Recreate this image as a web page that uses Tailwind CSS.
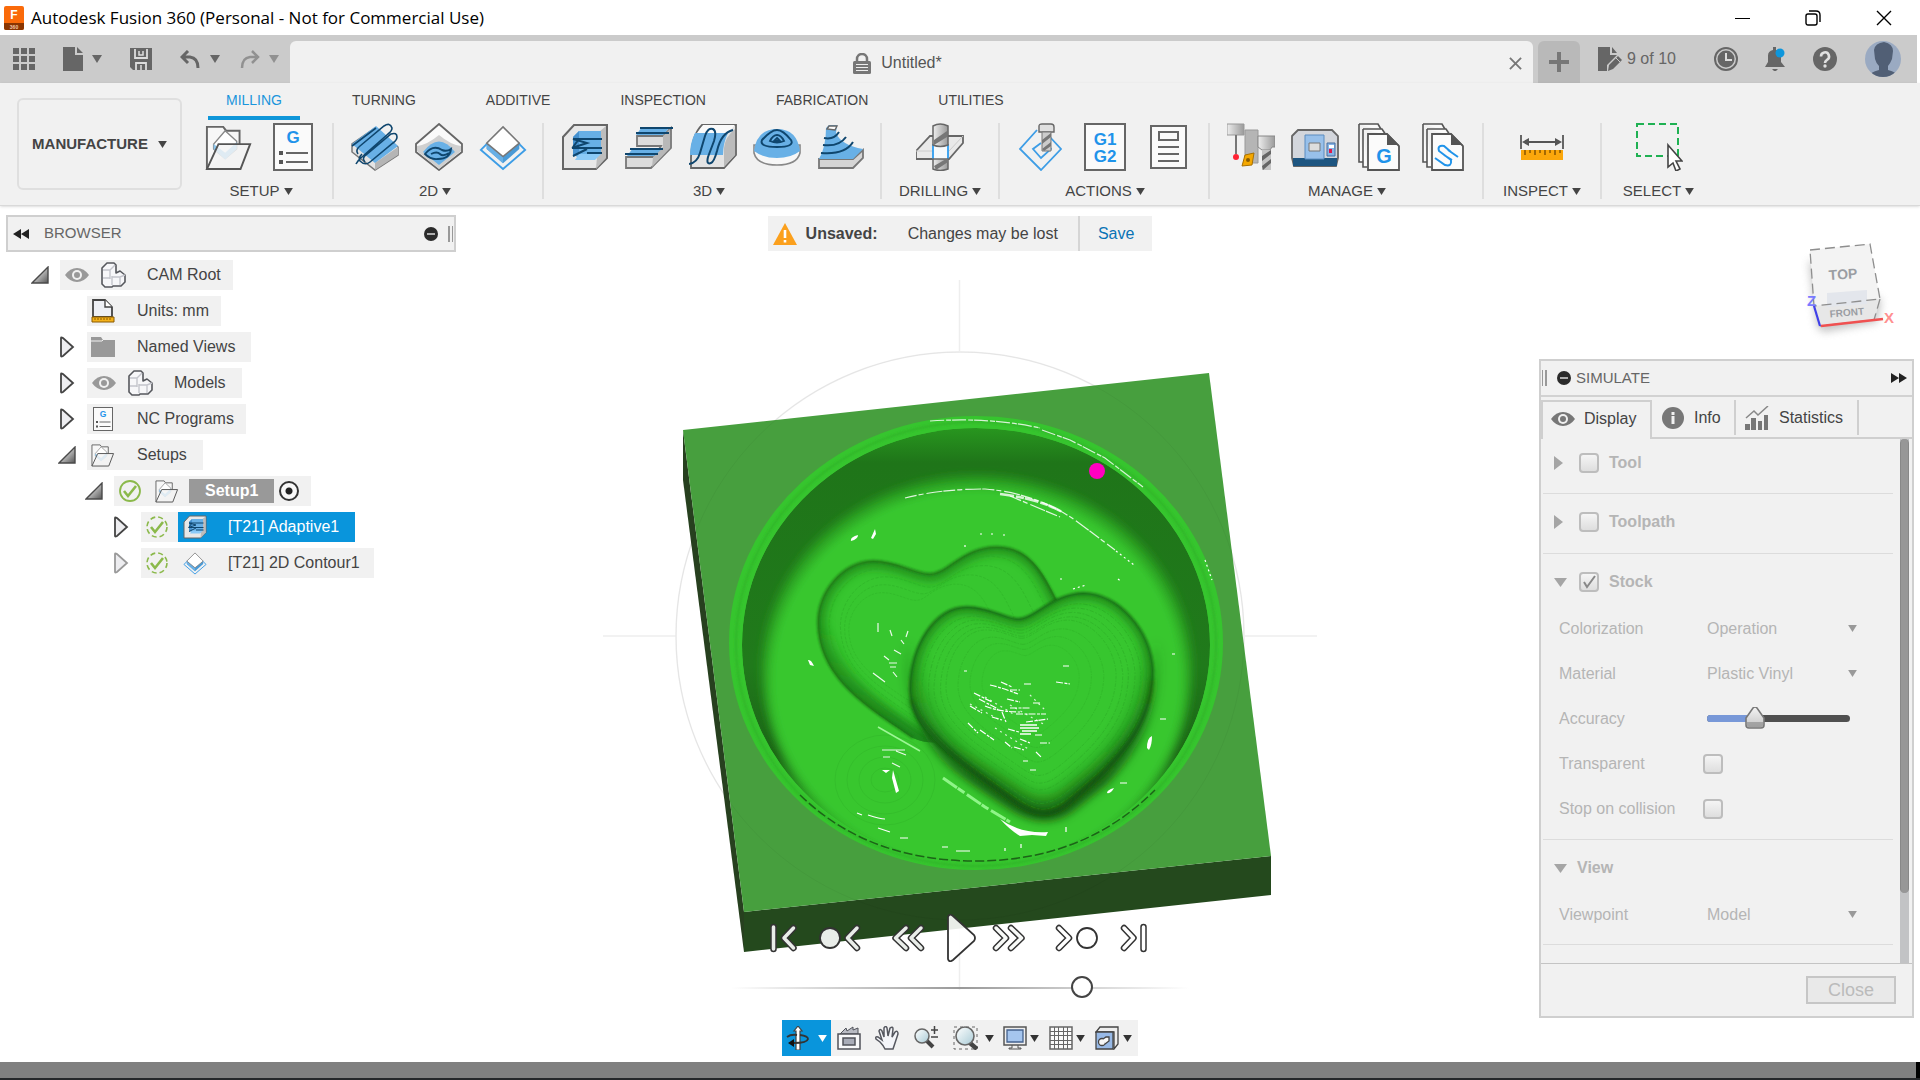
<!DOCTYPE html>
<html lang="en">
<head>
    <meta charset="UTF-8">
    <meta name="viewport" content="width=device-width, initial-scale=1.0">
    <title>Autodesk Fusion 360 (Personal - Not for Commercial Use)</title>
    <script src="https://cdn.jsdelivr.net/npm/@tailwindcss/browser@4"></script>
    <style>
        body { font-family: 'Liberation Sans', Arial, sans-serif; }
    </style>
</head>
<body class="bg-white text-[#444] text-[15px] flex flex-col min-h-screen overflow-hidden">

    <!-- Shared icons -->
    <svg class="absolute w-0 h-0" aria-hidden="true">
        <defs>
            <linearGradient id="grey" x1="0" y1="0" x2="0" y2="1"><stop offset="0" stop-color="#f4f4f4"/><stop offset="1" stop-color="#c4c4c4"/></linearGradient>
            <linearGradient id="greyH" x1="0" y1="0" x2="1" y2="0"><stop offset="0" stop-color="#eee"/><stop offset="1" stop-color="#9a9a9a"/></linearGradient>
            <linearGradient id="tri" x1="0" y1="0" x2="1" y2="1"><stop offset=".3" stop-color="#ddd"/><stop offset="1" stop-color="#555"/></linearGradient>
            <linearGradient id="lens" x1="0" y1="0" x2="1" y2="1"><stop offset="0" stop-color="#fff"/><stop offset="1" stop-color="#a9cbd6"/></linearGradient>
            <symbol id="down" viewBox="0 0 10 8"><path d="M0 0H10L5 8Z" fill="currentColor"/></symbol>
            <symbol id="eye" viewBox="0 0 24 16"><path d="M0 8Q5 1 12 1T24 8Q19 15 12 15T0 8Z" fill="currentColor"/><circle cx="12" cy="8" r="5" fill="#f1f1f1"/><circle cx="12" cy="8" r="3" fill="currentColor"/></symbol>
            <symbol id="open" viewBox="0 0 18 18"><path d="M1 17H17V1Z" fill="url(#tri)" stroke="#4a4a4a" stroke-width="1.4"/></symbol>
            <symbol id="closed" viewBox="0 0 18 22"><path d="M3 2V20Q3 21 5 20L15 11L5 2Q3 1 3 2Z" fill="#ededf0" stroke="currentColor" stroke-width="1.8"/></symbol>
            <symbol id="component" viewBox="0 0 26 26"><path d="M1 22V6L6 1H13L15 3V11L19 9L24 13V20L20 24H12L11 25H4Z" fill="#f7f7f9" stroke="#55575c" stroke-width="1.6" stroke-linejoin="round"/><path d="M2 8H9L14 3M9 8V17M2 16H9M11 15H19L24 13M19 15V23M11 14V23" fill="none" stroke="#c4c5cc" stroke-width="1.4"/></symbol>
            <symbol id="setup" viewBox="0 0 48 50"><path d="M1 48V4H18L21 8H35V22" fill="#f7f7f7" stroke="#666" stroke-width="2"/><path d="M8 22L20 8L32 19V27L20 37L8 27Z" fill="#fff" stroke="#888" stroke-width="1.5"/><path d="M8 22L20 31L32 20V27L20 38L8 27Z" fill="#8cc7ee"/><path d="M1 48L13 22H46L36 48Z" fill="#f4f4f4" fill-opacity=".8" stroke="#555" stroke-width="2"/></symbol>
            <symbol id="ncprog" viewBox="0 0 40 48"><rect x="1" y="1" width="38" height="46" fill="#fafafa" stroke="#666" stroke-width="2"/><path d="M6 28h4v4H6zM6 37h4v4H6z" fill="#555"/><path d="M13 30H35M13 39H35" stroke="#666" stroke-width="2"/><text x="20" y="20" text-anchor="middle" font-size="17" font-weight="bold" fill="#1f93ea">G</text></symbol>
            <symbol id="adaptive" viewBox="0 0 48 48"><path d="M2 14L13 2H46V35L35 46H2Z" fill="#e8e8e8" stroke="#666" stroke-width="2"/><path d="M35 46L45 35V3L38 9Z" fill="#bdbdbd"/><path d="M12 14L18 8H40V30L34 36H18L12 30Z" fill="#68b0e6"/><path d="M12 14L18 8V30L12 34Z" fill="#4691cf"/><path d="M18 31H40L34 37H14Z" fill="#8ccaf7"/><path d="M41 16H12L26 20L11 25H41M12 33L26 26M18 16L12 24M26 30H41" fill="none" stroke="#0f466e" stroke-width="2"/></symbol>
            <symbol id="contour" viewBox="0 0 48 50"><path d="M8 21L1 28L24 48L47 28L40 21" fill="none" stroke="#3d9de6" stroke-width="2"/><path d="M7 21L24 35L41 21V27L24 42L7 27Z" fill="#4a9ad6"/><path d="M7 21V27L24 42V33Z" fill="#68b0e6"/><path d="M24 4L41 21L24 35L7 21Z" fill="#fff" stroke="#777" stroke-width="1.6"/></symbol>
            <symbol id="check" viewBox="0 0 24 24"><path d="M6 12L10 17L18 7" fill="none" stroke="#8bb94b" stroke-width="2.6"/></symbol>
            <symbol id="minus" viewBox="0 0 14 14"><circle cx="7" cy="7" r="7" fill="#2b2b2b"/><path d="M3 7H11" stroke="#ddd" stroke-width="1.5"/></symbol>
            <symbol id="rewind" viewBox="0 0 16 10"><path d="M8 0V10L0 5ZM16 0V10L8 5Z" fill="#222"/></symbol>
            <symbol id="sheets" viewBox="0 0 42 48"><path d="M1 1H20L24 8M1 1V39H5" fill="#fafafa" stroke="#555" stroke-width="1.6"/><path d="M5 6H24L28 12M5 6V44H9" fill="#fafafa" stroke="#555" stroke-width="1.6"/><path d="M10 11H29L41 23V47H10Z" fill="#fbfbfb" stroke="#555" stroke-width="1.8"/><path d="M20 1L41 22H29V10Z" fill="#555"/></symbol>
        </defs>
    </svg>

    <!-- Title bar -->
    <header class="h-[35px] flex items-center justify-between bg-white text-black">
        <div class="flex items-center gap-[7px] pl-1">
            <svg class="w-5 h-6" viewBox="0 0 20 24"><rect width="20" height="24" rx="2" fill="#fa6a0a"/><path d="M0 17H20V22a2 2 0 0 1-2 2H2a2 2 0 0 1-2-2Z" fill="#8a3500"/><text x="10" y="13" text-anchor="middle" font-size="12" font-weight="bold" fill="#fff">F</text><text x="10" y="22.500" text-anchor="middle" font-size="5" font-weight="bold" fill="#f4c9a8">360</text></svg>
            <h1 class="font-['Open_Sans',sans-serif] text-[17px]">Autodesk Fusion 360 (Personal - Not for Commercial Use)</h1>
        </div>
        <div class="flex">
            <button class="w-[70px] h-8 grid place-items-center" aria-label="Minimize"><svg class="w-4 h-4" viewBox="0 0 16 16"><path d="M0 8.500H15" stroke="#000"/></svg></button>
            <button class="w-[70px] h-8 grid place-items-center" aria-label="Restore"><svg class="w-4 h-4" viewBox="0 0 16 16" fill="none" stroke="#000" stroke-width="1.4"><rect x="1" y="4" width="11" height="11" rx="2"/><path d="M4 1H11Q15 1 15 5V12"/></svg></button>
            <button class="w-[72px] h-8 grid place-items-center" aria-label="Close window"><svg class="w-4 h-4" viewBox="0 0 16 16" stroke="#000" stroke-width="1.4"><path d="M1 1L15 15M15 1L1 15"/></svg></button>
        </div>
    </header>

    <!-- Quick access and document tab -->
    <div class="h-12 mr-[3px] bg-[#cbcbcb] flex items-end text-[#666]">
        <div class="w-[290px] h-full flex items-center pl-[13px]">
            <button class="w-[50px]" aria-label="Data panel"><svg class="w-[22px] h-[22px]" viewBox="0 0 22 22" fill="#666"><path d="M0 0h6v6H0zM8 0h6v6H8zM16 0h6v6h-6zM0 8h6v6H0zM8 8h6v6H8zM16 8h6v6h-6zM0 16h6v6H0zM8 16h6v6H8zM16 16h6v6h-6z"/></svg></button>
            <button class="w-[67px] flex items-center gap-[9px]" aria-label="File"><svg class="w-5 h-6" viewBox="0 0 20 24" fill="#666"><path d="M0 0H12V8H20V24H0ZM14 0L20 6H14Z"/></svg><svg class="w-[10px] h-2"><use href="#down"/></svg></button>
            <button class="w-[50px]" aria-label="Save file"><svg class="w-[22px] h-[22px]" viewBox="0 0 22 22"><path d="M0 0H22V22H3L0 19Z" fill="#666"/><path d="M5 1V10H17V1M6 22V15H16V22" fill="none" stroke="#ddd" stroke-width="1.8"/><path d="M9 3V7H13V3M11 17V22" fill="none" stroke="#ddd" stroke-width="1.5"/></svg></button>
            <button class="w-[60px] flex items-center gap-[10px]" aria-label="Undo"><svg class="w-5 h-[18px]" viewBox="0 0 20 18"><path d="M2 7H10Q18 8 18 18M8 1L2 7L8 13" fill="none" stroke="#666" stroke-width="3"/></svg><svg class="w-[10px] h-2"><use href="#down"/></svg></button>
            <button class="flex items-center gap-[9px] text-[#919191]" aria-label="Redo"><svg class="w-5 h-[18px]" viewBox="0 0 20 18"><path d="M18 7H10Q2 8 2 18M12 1L18 7L12 13" fill="none" stroke="#919191" stroke-width="2.5"/></svg><svg class="w-[10px] h-2"><use href="#down"/></svg></button>
        </div>
        <div class="flex-1 h-[42px] bg-[#f1f1f1] rounded-t-md flex items-center pt-0.5">
            <div class="flex-1 flex justify-center items-center gap-[10px] text-base text-[#555] pr-1">
                <svg class="w-[18px] h-[21px]" viewBox="0 0 18 21"><path d="M4 9V6a5 5 0 0 1 10 0V9" fill="none" stroke="#777" stroke-width="2.5"/><rect y="8" width="18" height="13" rx="1.500" fill="#777"/><path d="M3 11.500H15M3 14.500H15M3 17.500H15" stroke="#eee"/></svg>
                <span>Untitled*</span>
            </div>
            <button class="mr-[11px]" aria-label="Close document"><svg class="w-[13px] h-[13px]" viewBox="0 0 14 14" stroke="#777" stroke-width="2"><path d="M1 1L13 13M13 1L1 13"/></svg></button>
        </div>
        <button class="ml-[5px] w-[42px] h-[42px] bg-[#b9b9b9] rounded-t-md grid place-items-center" aria-label="New document"><svg class="w-5 h-5" viewBox="0 0 20 20" stroke="#777" stroke-width="4"><path d="M10 0V20M0 10H20"/></svg></button>
        <div class="h-full flex items-center pl-[18px] pr-4">
            <button class="flex items-center gap-1 w-[116px] text-base"><svg class="w-[25px] h-6" viewBox="0 0 25 24" fill="#666"><path d="M0 0H12V8H19L9 18V24H0ZM14 0L19 6H14ZM11 18L20 9L24 13L15 22L10 24Z"/><path d="M18 11L22 15" stroke="#cbcbcb"/></svg><span>9 of 10</span></button>
            <button class="w-[49px]" aria-label="Job status"><svg class="w-6 h-6" viewBox="0 0 24 24"><circle cx="12" cy="12" r="11" fill="none" stroke="#666" stroke-width="2"/><circle cx="12" cy="12" r="8.500" fill="#666"/><path d="M12 6V13H18" fill="none" stroke="#ddd" stroke-width="2"/></svg></button>
            <button class="w-[50px]" aria-label="Notifications"><svg class="w-6 h-6" viewBox="0 0 24 24"><path d="M2 20L5 15V9a6 6 0 0 1 5-6V0h3V3a6 6 0 0 1 5 6v6l4 5ZM9 22h6l-3 3Z" fill="#666"/><circle cx="17" cy="6" r="4.500" fill="#0d96dc"/></svg></button>
            <button class="w-[52px]" aria-label="Help"><svg class="w-6 h-6" viewBox="0 0 24 24"><circle cx="12" cy="12" r="12" fill="#666"/><path d="M8 9.500a4 4 0 1 1 6 3.300Q12 14 12 16" fill="none" stroke="#e0e0e0" stroke-width="2.6"/><circle cx="12" cy="19" r="1.700" fill="#e0e0e0"/></svg></button>
            <button aria-label="Account"><svg class="w-9 h-9" viewBox="0 0 36 36"><defs><clipPath id="face"><circle cx="18" cy="18" r="18"/></clipPath></defs><g clip-path="url(#face)"><path d="M0 0H36V36H0Z" fill="#9aaac2"/><path d="M9 9Q10 2 19 1Q28 3 28 10L27 18Q25 23 23 25V29Q32 31 33 36H4Q5 31 14 29V25Q11 22 10 18Z" fill="#515f75"/></g></svg></button>
        </div>
    </div>

    <!-- Ribbon -->
    <div class="h-[123px] bg-[#f1f1f1] border-b border-[#d9d9d9] flex shadow-sm relative">
        <button class="ml-[17px] mt-[15px] w-[165px] h-[92px] border-2 border-[#dfdfdf] rounded-md font-bold flex items-center justify-center gap-[10px]">MANUFACTURE <svg class="w-[9px] h-[7px]"><use href="#down"/></svg></button>
        <div class="ml-1.5">
            <nav class="h-10 pl-5 flex gap-[34px] text-sm">
                <a href="#" class="px-[18px] h-[37px] flex items-center text-[#1a95dc] border-b-4 border-[#0f96d9]">MILLING</a>
                <a href="#" class="px-[18px] h-[33px] flex items-center">TURNING</a>
                <a href="#" class="px-[18px] h-[33px] flex items-center">ADDITIVE</a>
                <a href="#" class="px-[18px] h-[33px] flex items-center">INSPECTION</a>
                <a href="#" class="px-[18px] h-[33px] flex items-center">FABRICATION</a>
                <a href="#" class="px-[18px] h-[33px] flex items-center">UTILITIES</a>
            </nav>
            <div class="flex">
                <section class="h-[76px] pl-[17px] pr-[15px] border-r-2 border-[#dedede] flex flex-col items-center justify-between">
                    <div class="flex gap-4">
                        <button aria-label="Setup"><svg class="w-12 h-12"><use href="#setup"/></svg></button>
                        <button aria-label="NC program"><svg class="w-12 h-12"><use href="#ncprog"/></svg></button>
                    </div>
                    <button class="h-4 leading-4 flex items-center gap-1">SETUP <svg class="w-[9px] h-[7px]"><use href="#down"/></svg></button>
                </section>
                <section class="h-[76px] pl-[17px] pr-[15px] border-r-2 border-[#dedede] flex flex-col items-center justify-between">
                    <div class="flex gap-4">
                        <button aria-label="Face"><svg class="w-12 h-12" viewBox="0 0 48 48"><path d="M1 21V29L24 47L47 32V24L24 5Z" fill="#e4e4e4" stroke="#777" stroke-width="1.5"/><path d="M24 40V47L47 32V24Z" fill="#b5b5b5"/><path d="M1 21L25 3L47 23L24 40Z" fill="#68b0e6"/><path d="M7 31Q4 27 9 23L33 3Q39-1 41 5Q41 8 37 11L12 33Q7 37 5 41M1 23L25 5M14 39Q10 35 16 31L40 11Q46 9 46 14Q46 17 42 20L19 39Q14 43 9 38Q7 35 11 31" fill="none" stroke="#0f466e" stroke-width="1.6"/></svg></button>
                        <button aria-label="2D pocket"><svg class="w-12 h-12" viewBox="0 0 48 48"><path d="M24 1L47 21V29L24 47L1 29V21Z" fill="#fafafa" stroke="#666" stroke-width="1.8"/><path d="M2 23Q12 22 24 12Q36 22 46 23V28L24 46L2 28Z" fill="#d0d0d0"/><path d="M8 29Q24 8 40 29L24 42Z" fill="#68b0e6"/><path d="M10 31Q18 21 27 27Q32 29 36 26Q35 36 23 36Q16 37 10 31ZM16 31Q22 28 25 31T34 30" fill="none" stroke="#0f466e" stroke-width="1.9"/></svg></button>
                        <button aria-label="2D contour"><svg class="w-12 h-12"><use href="#contour"/></svg></button>
                    </div>
                    <button class="h-4 leading-4 flex items-center gap-1 mr-2">2D <svg class="w-[9px] h-[7px]"><use href="#down"/></svg></button>
                </section>
                <section class="h-[76px] pl-[17px] pr-[15px] border-r-2 border-[#dedede] flex flex-col items-center justify-between">
                    <div class="flex gap-4">
                        <button aria-label="Adaptive clearing"><svg class="w-12 h-12"><use href="#adaptive"/></svg></button>
                        <button aria-label="Pocket clearing"><svg class="w-12 h-12" viewBox="0 0 48 48"><path d="M1 34H29L36 23H12V13H38L46 5V25L26 45H1Z" fill="#dcdcdc" stroke="#777" stroke-width="1.8"/><path d="M27 44L45 25V6L38 13V24L28 34Z" fill="#b8b8b8"/><path d="M17 4H45L38 12H11ZM8 25H38L29 33H2Z" fill="#68b0e6"/><path d="M15 5H48M11 10H44M5 26H38M0 31H33" stroke="#0f466e" stroke-width="2"/></svg></button>
                        <button aria-label="Parallel"><svg class="w-12 h-12" viewBox="0 0 48 48"><path d="M2 45V34Q3 12 13 2H47V32L35 45Z" fill="#e4e4e4" stroke="#666" stroke-width="1.8"/><path d="M35 44L46 32V6Q36 14 35 25Z" fill="#bbb"/><path d="M14 2H46L39 10H8Z" fill="#fafafa"/><path d="M6 10H39Q34 20 34 32H1Q1 20 6 10Z" fill="#68b0e6"/><path d="M0 41Q8 40 11 30L16 13Q19 4 24 6Q28 8 25 18L19 34Q17 42 22 40Q25 39 28 28Q32 10 44 7" fill="none" stroke="#0f466e" stroke-width="2"/></svg></button>
                        <button aria-label="Morphed spiral"><svg class="w-12 h-12" viewBox="0 0 48 48"><path d="M1 22V30Q4 42 24 42T47 30V22Z" fill="#f7f7f7" stroke="#888" stroke-width="1.6"/><path d="M1 28Q4 6 24 6T47 28Q38 35 24 35T1 28Z" fill="#68b0e6"/><path d="M24 7Q30 7 38 17Q42 24 24 24T9 17Q18 7 24 7ZM24 12Q28 12 31 18Q24 21 17 18Q20 12 24 12ZM24 15L27 18H21Z" fill="none" stroke="#0f466e" stroke-width="1.9"/></svg></button>
                        <button aria-label="Contour"><svg class="w-12 h-12" viewBox="0 0 48 48"><path d="M2 36H36L46 27V35L36 45H2Z" fill="#d5d5d5" stroke="#777" stroke-width="1.8"/><path d="M9 5L12 2H20L19 10Q24 22 46 26L36 36H2Q9 24 9 5Z" fill="#68b0e6"/><path d="M10 6L12 3H20L18 7Z" fill="#fafafa" stroke="#666" stroke-width="1.4"/><path d="M7 15Q17 17 22 9M6 22Q22 24 29 14M4 30Q28 32 36 19" fill="none" stroke="#0f466e" stroke-width="2"/></svg></button>
                    </div>
                    <button class="h-4 leading-4 flex items-center gap-1 mr-2">3D <svg class="w-[9px] h-[7px]"><use href="#down"/></svg></button>
                </section>
                <section class="h-[76px] w-[118px] border-r-2 border-[#dedede] flex flex-col items-center justify-between">
                    <button aria-label="Drill"><svg class="w-12 h-12" viewBox="0 0 48 48"><path d="M0 28L14 13H47V20L33 36H0Z" fill="#e9e9e9" stroke="#666" stroke-width="1.8"/><path d="M0 28H33L47 13" fill="none" stroke="#ccc"/><rect x="17" y="21" width="15" height="15" fill="#f5f9fc"/><path d="M17 21V36M32 21V36" stroke="#2f9df0" stroke-width="1.8"/><path d="M17 3Q24-1 32 3V22Q24 25 17 22ZM17 36H32V46Q24 49 17 46Z" fill="url(#greyH)" stroke="#666" stroke-width="1.5"/><path d="M18 17L31 8V14L18 22ZM18 43L30 36H32V39L20 47Z" fill="#777"/></svg></button>
                    <button class="h-4 leading-4 flex items-center gap-1">DRILLING <svg class="w-[9px] h-[7px]"><use href="#down"/></svg></button>
                </section>
                <section class="h-[76px] pl-[17px] pr-[15px] border-r-2 border-[#dedede] flex flex-col items-center justify-between">
                    <div class="flex gap-4">
                        <button aria-label="Simulate"><svg class="w-12 h-12" viewBox="0 0 48 48"><path d="M20 7L3 26L24 47L44 26L32 13M24 20L16 26L24 35L34 26L31 22" fill="none" stroke="#3d9de6" stroke-width="1.8"/><path d="M22 3Q22 1 25 1H34Q37 1 37 4V9H22Z" fill="#e0e0e0" stroke="#666" stroke-width="1.4"/><path d="M25 9H34V28H25Z" fill="#ccc" stroke="#777"/><path d="M25 17L34 10V14L25 21ZM25 26L34 19V23L27 28Z" fill="#777"/></svg></button>
                        <button aria-label="Post process"><svg class="w-12 h-12" viewBox="0 0 48 48"><rect x="4" y="1" width="40" height="46" fill="#fafafa" stroke="#666" stroke-width="2"/><g font-size="17" font-weight="bold" fill="#1f93ea" text-anchor="middle"><text x="24" y="22">G1</text><text x="24" y="39">G2</text></g></svg></button>
                        <button aria-label="Setup sheet"><svg class="w-12 h-12" viewBox="0 0 48 48" fill="none" stroke="#666" stroke-width="2"><rect x="6" y="3" width="35" height="42" fill="#fafafa"/><path d="M14 9H33V17H14ZM13 24H34M13 31H34M13 38H34"/></svg></button>
                    </div>
                    <button class="h-4 leading-4 flex items-center gap-1">ACTIONS <svg class="w-[9px] h-[7px]"><use href="#down"/></svg></button>
                </section>
                <section class="h-[76px] pl-[17px] pr-[15px] border-r-2 border-[#dedede] flex flex-col items-center justify-between">
                    <div class="flex gap-4">
                        <button aria-label="Tool library"><svg class="w-12 h-12" viewBox="0 0 48 48"><path d="M0 1H17V12H0Z" fill="url(#greyH)" stroke="#999"/><path d="M9 12V31" stroke="#777" stroke-width="2"/><circle cx="9" cy="34" r="3" fill="#f23"/><path d="M18 7H31V40H21L18 34Z" fill="#b5b5b5" stroke="#999"/><path d="M18 32L27 30L25 42L15 43Z" fill="#f5a800" stroke="#a87000"/><circle cx="21" cy="37" r="2" fill="#8a5c00"/><path d="M31 13H48V24H45L43 27H35L31 24Z" fill="url(#greyH)" stroke="#888"/><path d="M35 27H44V47H35Z" fill="#c4c4c4"/><path d="M35 33L44 27V31L35 38ZM35 43L44 36V40L36 47Z" fill="#666"/></svg></button>
                        <button aria-label="Machine library"><svg class="w-12 h-12" viewBox="0 0 48 48"><path d="M1 13L7 7H41L47 13V35L45 43H3L1 35Z" fill="#d3d6dc" stroke="#666" stroke-width="1.8"/><path d="M2 35H46V43H2Z" fill="#1d5580"/><path d="M14 12H33V36H14Z" fill="#98c0ea" stroke="#5b8cc0"/><path d="M18 20H29V28H18Z" fill="#ddd" stroke="#777"/><path d="M36 20H44V33H36Z" fill="#86b4e6" stroke="#476fa0"/><path d="M38 26H41V30H38Z" fill="#e01848"/><path d="M38 22H43V25H38Z" fill="#fff"/></svg></button>
                        <button aria-label="Post library"><svg class="w-12 h-12" viewBox="-3 0 48 48"><use href="#sheets" width="42" height="48"/><text x="26" y="40" text-anchor="middle" font-size="20" font-weight="bold" fill="#1f93ea">G</text></svg></button>
                        <button aria-label="Template library"><svg class="w-12 h-12" viewBox="-3 0 48 48"><use href="#sheets" width="42" height="48"/><path d="M13 35L23 42Q30 44 29 37L17 28Q15 22 22 23L29 29M22 32L30 37M36 34L26 27" fill="none" stroke="#1f93ea" stroke-width="2"/></svg></button>
                    </div>
                    <button class="h-4 leading-4 flex items-center gap-1">MANAGE <svg class="w-[9px] h-[7px]"><use href="#down"/></svg></button>
                </section>
                <section class="h-[76px] w-[118px] border-r-2 border-[#dedede] flex flex-col items-center justify-between">
                    <button aria-label="Measure"><svg class="w-12 h-12" viewBox="0 0 48 48"><path d="M3 12V26M45 12V26" stroke="#666" stroke-width="2"/><path d="M6 19H42" stroke="#555" stroke-width="2"/><path d="M4 19L11 15V23ZM44 19L37 15V23Z" fill="#555"/><path d="M3 27H45V37H3Z" fill="#fba70b"/><path d="M7 27V32M12 27V30M17 27V32M22 27V30M27 27V32M32 27V30M37 27V32M42 27V30" stroke="#805000" stroke-width="1.4"/></svg></button>
                    <button class="h-4 leading-4 flex items-center gap-1">INSPECT <svg class="w-[9px] h-[7px]"><use href="#down"/></svg></button>
                </section>
                <section class="h-[76px] w-[113px] flex flex-col items-center justify-between">
                    <button aria-label="Select"><svg class="w-12 h-12" viewBox="0 0 48 48"><path d="M2 1H43V33H2Z" fill="none" stroke="#1fb153" stroke-width="2" stroke-dasharray="7 4"/><path d="M33 22L47 38H41L45 46L41 48L38 40L33 44Z" fill="#fff" stroke="#444" stroke-width="1.6"/></svg></button>
                    <button class="h-4 leading-4 flex items-center gap-1">SELECT <svg class="w-[9px] h-[7px]"><use href="#down"/></svg></button>
                </section>
            </div>
        </div>
    </div>

    <!-- Workspace -->
    <main class="flex-1 relative grid grid-cols-[1fr_auto_1fr]">

        <!-- 3D viewport -->
        <svg class="absolute inset-0 w-full h-full" viewBox="0 206 1920 856" aria-label="Simulated stock">
            <defs>
                <filter id="b1"><feGaussianBlur stdDeviation="1"/></filter>
                <filter id="b2"><feGaussianBlur stdDeviation="2"/></filter>
                <filter id="b5"><feGaussianBlur stdDeviation="5"/></filter>
                <filter id="b9"><feGaussianBlur stdDeviation="9"/></filter>
                <path id="front" d="M1018 619C1008 619 988 607 967 607C935 607 910 645 910 690C912 735 955 761 1007 797C1020 806 1032 815 1042 815C1058 815 1075 800 1100 777C1130 748 1153 715 1153 670C1151 630 1118 593 1083 593C1052 594 1034 619 1018 619Z"/>
                <path id="back" d="M930 574C915 574 897 561 873 561C842 562 818 592 818 623C819 680 870 708 913 738C960 760 1040 700 1060 606C1050 590 1038 547 997 547C962 547 948 574 930 574Z"/>
                <clipPath id="cfront"><use href="#front"/></clipPath>
                <clipPath id="cback"><use href="#back"/></clipPath>
                <clipPath id="cbowl"><ellipse cx="976" cy="645" rx="234" ry="217"/></clipPath>
                <linearGradient id="wall" x1="0" y1="0" x2="0" y2="1"><stop offset="0" stop-color="#28961f"/><stop offset=".08" stop-color="#1f7519"/><stop offset=".55" stop-color="#207a1b"/><stop offset=".75" stop-color="#1c6417"/><stop offset=".9" stop-color="#2aa123"/><stop offset="1" stop-color="#35c52d"/></linearGradient>
                <linearGradient id="shade" gradientUnits="userSpaceOnUse" x1="0" y1="640" x2="0" y2="780"><stop offset="0" stop-color="#14500f" stop-opacity="0"/><stop offset="1" stop-color="#14500f"/></linearGradient>
                <linearGradient id="shadeBack" gradientUnits="userSpaceOnUse" x1="0" y1="620" x2="0" y2="720"><stop offset="0" stop-color="#1f8a1a" stop-opacity="0"/><stop offset="1" stop-color="#1f8a1a"/></linearGradient>
            </defs>
            <g fill="none" stroke="#eee" stroke-width="1.5">
                <circle cx="960" cy="636" r="284"/>
                <path d="M959.500 280V351M603 636H676M1245 636H1317M959.500 920V990"/>
            </g>
            <path d="M683 430L744 912V952L683 480Z" fill="#27401f"/>
            <path d="M744 912L1271 856V895L744 952Z" fill="#24491d"/>
            <path d="M683 430L1209 373L1271 856L744 912Z" fill="#479f3e"/>
            <circle cx="960" cy="636" r="284" fill="none" stroke="#000" stroke-opacity=".04"/>
            <ellipse cx="976" cy="643" rx="247" ry="227" fill="#36c52e"/>
            <ellipse cx="976" cy="644" rx="240" ry="222" fill="none" stroke="#30b529" stroke-width="2" filter="url(#b1)"/>
            <g clip-path="url(#cbowl)">
                <ellipse cx="976" cy="645" rx="234" ry="217" fill="url(#wall)"/>
                <ellipse cx="977" cy="671" rx="215" ry="195" fill="#2aa123" filter="url(#b5)"/>
                <ellipse cx="977" cy="679" rx="208" ry="192" fill="#37c72f" filter="url(#b5)"/>
            </g>
            <path d="M800 795Q868 861 976 861T1155 790" fill="none" stroke="#1c6417" stroke-width="1.5" stroke-dasharray="9 3"/>
            <g fill="none" stroke="#2eae27" stroke-width="1" opacity=".35">
                <ellipse cx="885" cy="780" rx="14" ry="12"/><ellipse cx="885" cy="780" rx="26" ry="23"/><ellipse cx="885" cy="780" rx="38" ry="34"/><ellipse cx="885" cy="780" rx="50" ry="45"/>
            </g>

            <!-- Rear heart -->
            <use href="#back" fill="#37c62f"/>
            <g clip-path="url(#cback)">
                <use href="#back" fill="none" stroke="#1c7a18" stroke-width="14" opacity=".7" filter="url(#b5)"/>
                <path d="M820 620C825 680 870 712 925 748" fill="none" stroke="url(#shadeBack)" stroke-width="24" filter="url(#b5)"/>
                <g fill="none" stroke="#2aa724" opacity=".5" stroke-dasharray="4 2">
                    <use href="#back" transform="translate(93 64) scale(.9)"/><use href="#back" transform="translate(186 128) scale(.8)"/><use href="#back" transform="translate(272 192) scale(.7)"/><use href="#back" transform="translate(358 256) scale(.6)"/>
                </g>
            </g>
            <path d="M1057 602C1045 580 1032 547 997 547C962 547 948 574 930 574C915 574 897 561 873 561C842 562 818 592 818 623C819 680 870 708 913 738" fill="none" stroke="#1a7016" stroke-width="2.500" opacity=".8" filter="url(#b1)"/>

            <!-- Front heart -->
            <path d="M908 640C908 745 955 765 1007 801Q1042 826 1068 808L1103 780C1132 750 1157 715 1156 640" fill="none" stroke="url(#shade)" stroke-width="10" filter="url(#b5)"/>
            <use href="#front" fill="#37c62f"/>
            <g clip-path="url(#cfront)">
                <path d="M903 640C906 745 955 765 1007 801Q1042 826 1068 808L1103 780C1132 750 1160 715 1158 640" fill="none" stroke="url(#shade)" stroke-width="28" opacity=".85" filter="url(#b9)"/>
                <use href="#front" fill="none" stroke="#1c7a18" stroke-width="12" opacity=".8" filter="url(#b5)"/>
                <g fill="none" stroke="#2aa324" opacity=".55" stroke-dasharray="5 2 2 2">
                    <use href="#front" transform="translate(52 35) scale(.95)"/><use href="#front" transform="translate(103 70) scale(.9)"/><use href="#front" transform="translate(155 104) scale(.85)"/><use href="#front" transform="translate(206 138) scale(.8)"/><use href="#front" transform="translate(258 172) scale(.75)"/><use href="#front" transform="translate(309 205) scale(.7)"/><use href="#front" transform="translate(412 273) scale(.6)"/><use href="#front" transform="translate(515 340) scale(.5)"/><use href="#front" transform="translate(618 408) scale(.4)"/>
                </g>
            </g>
            <use href="#front" fill="none" stroke="#186313" stroke-width="2.500" opacity=".8" filter="url(#b1)"/>
            <path d="M911 700C925 740 985 780 1007 796Q1042 824 1066 805L1100 776C1125 750 1150 720 1152 680" fill="none" stroke="url(#shade)" stroke-width="5" opacity=".9" filter="url(#b2)"/>

            <!-- Specular highlights -->
            <g fill="none" stroke="#fff" stroke-width="1.2">
                <path d="M990 685Q1003 688 1018 694M1001 682L1012 687M1010 690H1020M974 693L992 702M979 699L998 709M985 706Q1000 712 1020 712M970 706L982 713M1002 712L1006 722M1010 708H1031M1016 714H1046M992 717L1002 720M1007 699L1020 702M1033 703H1040M1026 722L1048 719M1005 742L1012 748M1008 729L1019 732M1014 747L1024 750M1020 739L1030 743M1035 735H1043M1023 761H1028M1036 752L1042 758M1030 770H1036M968 723L978 733M980 730L994 740M1040 743H1050M1024 684H1032M1056 682L1070 684M1063 666H1069M964 671H967" stroke-dasharray="7 1.500 3 1"/>
                <path d="M1020 725H1037M1020 728H1039M1022 731H1037M1020 734H1031" stroke-width="1.6"/>
                <path d="M970 704L1000 720M985 697L1015 715M1010 705L1045 725M995 728L1030 750M1030 695L1045 710" stroke-dasharray="2 4" opacity=".8"/>
                <path d="M878 623V632M890 630L892 636M894 650L901 654M901 640L904 644M889 663H897M890 667H896M893 672L897 677M873 673L885 682M906 637L908 631M884 656L889 660" opacity=".9"/>
                <path d="M905 498Q940 489 985 489Q1035 493 1075 520L1115 550M1010 496L1060 517" stroke-dasharray="12 2 5 3 16 1" opacity=".85"/>
                <path d="M1000 494Q1040 499 1062 512" stroke-width="2.5" stroke-dasharray="14 2 8 1" opacity=".8"/>
                <path d="M930 421Q990 417 1040 428M1042 430L1070 440L1105 458L1143 487" stroke-dasharray="14 2 5 1" opacity=".8"/>
                <path d="M1205 560L1212 580M1116 551L1134 565M965 545V548M980 534H982M991 534H993M1003 535H1006M1060 579H1065M1073 589L1086 585M1118 579L1122 582" stroke-dasharray="2 3"/>
                <path d="M882 750H905M883 757H890M896 751L906 755M892 763L900 767" opacity=".9"/>
                <path d="M857 813L862 815M868 815Q880 819 885 819M878 828L890 832M900 838H908M956 851H970M1005 848V851M1021 844V848M1066 827V832M1120 783H1127M1160 719H1166M1172 654H1175M942 847H948"/>
            </g>
            <path d="M878 727L920 751" stroke="#9cf795" stroke-width="1.500"/>
            <path d="M943 778L985 807L1010 822" fill="none" stroke="#8ff588" stroke-width="3" stroke-dasharray="17 1 8 3"/>
            <path d="M1000 819Q1020 834 1048 832L1046 836L1032 835L1020 836Q1010 830 1000 819ZM893 770L899 791L896 793L892 778ZM851 541Q850 537 858 535Q858 539 851 541ZM871 538L875 529L876 534L873 539ZM1147 748Q1147 738 1152 736Q1152 745 1149 750ZM1107 793Q1107 790 1114 788Q1111 794 1107 793ZM808 660Q811 659 814 666L810 665ZM882 770H890L886 773Z" fill="#fff"/>
            <circle cx="1097" cy="471" r="8" fill="#ff00c0"/>
        </svg>

        <!-- Browser panel -->
        <aside class="relative w-[450px] ml-1.5 mt-[9px]">
            <div class="h-[37px] border-2 border-[#cfcfcf] bg-[#f1f1f1] flex items-center text-[#666]">
                <button class="ml-[5px]" aria-label="Collapse browser"><svg class="w-4 h-[10px]"><use href="#rewind"/></svg></button>
                <h2 class="ml-[15px] flex-1">BROWSER</h2>
                <button class="mr-[10px]" aria-label="Hide browser"><svg class="w-[14px] h-[14px]"><use href="#minus"/></svg></button>
                <span class="w-[5px] h-4 border-l-2 border-r border-[#999] mr-px"></span>
            </div>
            <ul class="mt-2 flex flex-col gap-1.5 pl-[25px] text-base">
                <li class="flex items-center gap-[11px]">
                    <svg class="w-[18px] h-[18px]"><use href="#open"/></svg>
                    <div class="h-[30px] bg-[#f1f1f1] flex items-center pl-[5px] pr-3"><svg class="w-6 h-4 text-[#999]"><use href="#eye"/></svg><svg class="w-[26px] h-[26px] ml-3"><use href="#component"/></svg><span class="ml-5">CAM Root</span></div>
                </li>
                <li class="flex items-center gap-[11px] pl-[27px]">
                    <span class="w-[18px]"></span>
                    <div class="h-[30px] bg-[#f1f1f1] flex items-center pl-1 pr-3"><svg class="w-6 h-6" viewBox="0 0 24 24"><path d="M2 18V1H14L21 8V18Z" fill="#eef0f5" stroke="#444" stroke-width="1.8"/><path d="M14 1V8H21" fill="#fff" stroke="#444" stroke-width="1.4"/><path d="M1 18H23V23H1Z" fill="#f5b21a" stroke="#8a5a00"/><path d="M4 19V21M7 19V21M10 19V21M13 19V21M16 19V21M19 19V21" stroke="#8a5a00"/></svg><span class="ml-[22px]">Units: mm</span></div>
                </li>
                <li class="flex items-center gap-[11px] pl-[27px]">
                    <svg class="w-[18px] h-[22px] text-[#444]"><use href="#closed"/></svg>
                    <div class="h-[30px] bg-[#f1f1f1] flex items-center pl-1 pr-4"><svg class="w-6 h-5" viewBox="0 0 24 20" fill="#999"><path d="M0 0H10L12 3H24V20H0Z"/><path d="M0 4H11L13 2" stroke="#f1f1f1" fill="none"/></svg><span class="ml-[22px]">Named Views</span></div>
                </li>
                <li class="flex items-center gap-[11px] pl-[27px]">
                    <svg class="w-[18px] h-[22px] text-[#444]"><use href="#closed"/></svg>
                    <div class="h-[30px] bg-[#f1f1f1] flex items-center pl-[5px] pr-4"><svg class="w-6 h-4 text-[#999]"><use href="#eye"/></svg><svg class="w-[26px] h-[26px] ml-3"><use href="#component"/></svg><span class="ml-5">Models</span></div>
                </li>
                <li class="flex items-center gap-[11px] pl-[27px]">
                    <svg class="w-[18px] h-[22px] text-[#444]"><use href="#closed"/></svg>
                    <div class="h-[30px] bg-[#f1f1f1] flex items-center pl-1 pr-3"><svg class="w-6 h-6"><use href="#ncprog"/></svg><span class="ml-[22px]">NC Programs</span></div>
                </li>
                <li class="flex items-center gap-[11px] pl-[27px]">
                    <svg class="w-[18px] h-[18px]"><use href="#open"/></svg>
                    <div class="h-[30px] bg-[#f1f1f1] flex items-center pl-1 pr-4"><svg class="w-6 h-6"><use href="#setup"/></svg><span class="ml-[22px]">Setups</span></div>
                </li>
                <li class="flex items-center gap-[11px] pl-[54px]">
                    <svg class="w-[18px] h-[18px]"><use href="#open"/></svg>
                    <div class="h-[30px] bg-[#f1f1f1] flex items-center pl-1 pr-3"><svg class="w-6 h-6" viewBox="0 0 24 24"><circle cx="12" cy="12" r="10" fill="none" stroke="#8bb94b" stroke-width="1.8"/><use href="#check"/></svg><svg class="w-6 h-6 ml-[13px]"><use href="#setup"/></svg><span class="ml-[10px] px-4 h-6 leading-6 bg-[#999] text-white font-bold">Setup1</span><label class="ml-[5px] flex"><input type="radio" checked aria-label="Activate Setup1" class="appearance-none w-5 h-5 rounded-full border-2 border-[#333] bg-[radial-gradient(circle,#222_3px,#f8f8f8_4px)]"></label></div>
                </li>
                <li class="flex items-center gap-[11px] pl-[81px]">
                    <svg class="w-[18px] h-[22px] text-[#444]"><use href="#closed"/></svg>
                    <div class="h-[30px] bg-[#f1f1f1] flex items-center pl-1"><svg class="w-6 h-6" viewBox="0 0 24 24"><circle cx="12" cy="12" r="10" fill="none" stroke="#8bb94b" stroke-width="1.6" stroke-dasharray="5 3"/><use href="#check"/></svg><div class="ml-[9px] h-[30px] bg-[#0995dc] text-white flex items-center pl-[5px] pr-4"><svg class="w-6 h-6"><use href="#adaptive"/></svg><span class="ml-[21px]">[T21] Adaptive1</span></div></div>
                </li>
                <li class="flex items-center gap-[11px] pl-[81px]">
                    <svg class="w-[18px] h-[22px] text-[#999]"><use href="#closed"/></svg>
                    <div class="h-[30px] bg-[#f1f1f1] flex items-center pl-1 pr-[14px]"><svg class="w-6 h-6" viewBox="0 0 24 24"><circle cx="12" cy="12" r="10" fill="none" stroke="#8bb94b" stroke-width="1.6" stroke-dasharray="5 3"/><use href="#check"/></svg><svg class="w-6 h-6 ml-[14px]"><use href="#contour"/></svg><span class="ml-[21px]">[T21] 2D Contour1</span></div>
                </li>
            </ul>
        </aside>

        <!-- Centre column -->
        <div class="relative flex flex-col items-center justify-between pt-[10px] pb-1.5">
            <div class="h-[35px] bg-[#f1f1f1] flex items-center text-base">
                <svg class="ml-1 w-[26px] h-6" viewBox="0 0 26 24"><path d="M13 1L25 23H1Z" fill="#fba01d"/><path d="M13 8V16M13 18V20.500" stroke="#fff" stroke-width="2.6"/></svg>
                <strong class="ml-2">Unsaved:</strong>
                <span class="ml-[30px]">Changes may be lost</span>
                <button class="ml-5 h-full border-l-2 border-[#d5d5d5] px-[18px] text-[#0a73b5]">Save</button>
            </div>

            <div class="flex flex-col items-center">
                <div class="grid grid-cols-[49px_72px_56px_45px_63px_65px_27px] items-center mr-1">
                    <button aria-label="Go to start"><svg class="w-[27px] h-[30px]" viewBox="0 0 27 30"><g fill="none" stroke-linecap="round" stroke-linejoin="round"><path d="M23.500 5L14 15L23.500 25M3.500 4V26" stroke="#333" stroke-width="6.500"/><path d="M23.500 5L14 15L23.500 25M3.500 4V26" stroke="#e9ede9" stroke-width="3.500"/></g></svg></button>
                    <button aria-label="Previous operation"><svg class="w-[42px] h-[30px]" viewBox="0 0 42 30"><circle cx="11" cy="15" r="10" fill="#e9ede9" stroke="#333" stroke-width="1.8"/><g fill="none" stroke-linecap="round" stroke-linejoin="round"><path d="M38 5L28.500 15L38 25" stroke="#333" stroke-width="6.500"/><path d="M38 5L28.500 15L38 25" stroke="#e9ede9" stroke-width="3.500"/></g></svg></button>
                    <button aria-label="Rewind"><svg class="w-[34px] h-[30px]" viewBox="0 0 34 30"><g fill="none" stroke-linecap="round" stroke-linejoin="round"><path d="M15 5L4.500 15L15 25" stroke="#333" stroke-width="6.500"/><path d="M15 5L4.500 15L15 25" stroke="#e9ede9" stroke-width="3.500"/><path d="M30 5L20 15L30 25" stroke="#333" stroke-width="6.500"/><path d="M30 5L20 15L30 25" stroke="#e9ede9" stroke-width="3.500"/></g></svg></button>
                    <button aria-label="Play"><svg class="w-[29px] h-12" viewBox="0 0 29 48"><path d="M1 3Q2-1 6 2L27 21Q29 24 27 27L6 46Q2 49 1 45Z" fill="#fff" fill-opacity=".9" stroke="#333" stroke-width="1.8"/></svg></button>
                    <button aria-label="Fast forward"><svg class="w-[34px] h-[30px]" viewBox="0 0 34 30"><g fill="none" stroke-linecap="round" stroke-linejoin="round"><path d="M4 5L14 15L4 25" stroke="#333" stroke-width="6.500"/><path d="M4 5L14 15L4 25" stroke="#f8faf8" stroke-width="3.500"/><path d="M19 5L29.500 15L19 25" stroke="#333" stroke-width="6.500"/><path d="M19 5L29.500 15L19 25" stroke="#f8faf8" stroke-width="3.500"/></g></svg></button>
                    <button aria-label="Next operation"><svg class="w-[43px] h-[30px]" viewBox="0 0 43 30"><circle cx="32" cy="15" r="10" fill="#fff" stroke="#333" stroke-width="1.8"/><g fill="none" stroke-linecap="round" stroke-linejoin="round"><path d="M4 5L14 15L4 25" stroke="#333" stroke-width="6.500"/><path d="M4 5L14 15L4 25" stroke="#fff" stroke-width="3.500"/></g></svg></button>
                    <button aria-label="Go to end"><svg class="w-[27px] h-[30px]" viewBox="0 0 27 30"><g fill="none" stroke-linecap="round" stroke-linejoin="round"><path d="M4 5L13.500 15L4 25M23.500 4V26" stroke="#333" stroke-width="6.500"/><path d="M4 5L13.500 15L4 25M23.500 4V26" stroke="#fff" stroke-width="3.500"/></g></svg></button>
                </div>
                <div class="relative w-[458px] h-6 mt-[13px]">
                    <div class="absolute inset-x-0 top-3 h-0.5 bg-linear-to-r from-transparent via-[#999] to-transparent"></div>
                    <input type="range" min="0" max="100" value="78" aria-label="Simulation position" class="absolute inset-0 w-full h-6 appearance-none bg-transparent [&::-webkit-slider-thumb]:appearance-none [&::-webkit-slider-thumb]:w-[22px] [&::-webkit-slider-thumb]:h-[22px] [&::-webkit-slider-thumb]:rounded-full [&::-webkit-slider-thumb]:bg-white [&::-webkit-slider-thumb]:border-2 [&::-webkit-slider-thumb]:border-[#444]">
                </div>
                <div class="mt-[21px] h-9 w-[356px] bg-[#f1f1f1] flex text-[#333]">
                    <button class="w-[49px] bg-[#0995dc] text-white flex items-center gap-2 pl-1" aria-label="Orbit"><svg class="w-6 h-6" viewBox="0 0 24 24"><path d="M10 24V5H8L12 0L16 5H14V24Z" fill="#fff" stroke="#444" stroke-width="1.2"/><path d="M1 11Q5 8 11 9M14 9Q22 10 22 13Q21 17 8 17" fill="none" stroke="#333" stroke-width="1.8"/><path d="M2 17L8 13V21Z" fill="#111"/></svg><svg class="w-[9px] h-[7px]"><use href="#down"/></svg></button>
                    <button class="w-[36px] grid place-items-center" aria-label="Look at"><svg class="w-6 h-6" viewBox="0 0 24 24" stroke="#50525a" stroke-width="1.5"><path d="M3 8L9 2L10 5L16 1V4L21 2V8Z" fill="#b9bbc4" stroke-width="1"/><path d="M1 8H23V23H1Z" fill="#f8f8fa"/><path d="M6 12H18V19H6Z" fill="#a9acb8"/></svg></button>
                    <button class="w-[40px] grid place-items-center" aria-label="Pan"><svg class="w-6 h-6" viewBox="0 0 24 24"><path d="M10 23Q8 19 5 16L1 13Q0 10 3 11L7 14L4 5Q5 2 7 5L9 11L9 2Q11-1 12 2L13 10L15 2Q18 0 18 3L17 11L20 6Q23 4 23 8L20 17L18 23Z" fill="#f4f5f9" stroke="#55575f" stroke-width="1.5"/></svg></button>
                    <button class="w-[38px] grid place-items-center" aria-label="Zoom"><svg class="w-6 h-6" viewBox="0 0 24 24"><path d="M13 15L19 21" stroke="#444" stroke-width="4"/><circle cx="8" cy="10" r="7" fill="url(#lens)" stroke="#666" stroke-width="1.5"/><path d="M17 4H24M20.500 0V8M17 11H24" stroke="#444" stroke-width="1.5"/></svg></button>
                    <button class="w-[54px] flex items-center gap-[7px] pl-2" aria-label="Fit"><svg class="w-[25px] h-6" viewBox="0 0 25 24"><path d="M1 1H24V23H1Z" fill="none" stroke="#666" stroke-dasharray="3 3"/><path d="M17 17L24 23" stroke="#444" stroke-width="4.500"/><circle cx="12" cy="10" r="9" fill="url(#lens)" stroke="#666" stroke-width="1.6"/></svg><svg class="w-[9px] h-[7px]"><use href="#down"/></svg></button>
                    <button class="w-[46px] flex items-center gap-[3px] pl-1" aria-label="Display settings"><svg class="w-6 h-6" viewBox="0 0 24 24" stroke="#555"><path d="M9 18H15V22H18V23H6V22H9Z" fill="#eee"/><path d="M1 1H23V19H1Z" fill="#eee" stroke-width="1.5"/><path d="M4 4H20V16H4Z" fill="#a5c5ee" stroke="#44628e" stroke-width="1.3"/></svg><svg class="w-[9px] h-[7px]"><use href="#down"/></svg></button>
                    <button class="w-[46px] flex items-center gap-[3px] pl-1" aria-label="Grid and snaps"><svg class="w-6 h-6" viewBox="0 0 24 24" stroke="#666"><path d="M1 1H23V23H1Z" fill="#fafafa" stroke-width="1.5"/><path d="M5.500 1V23M9.500 1V23M14.500 1V23M18.500 1V23M1 5.500H23M1 9.500H23M1 14.500H23M1 18.500H23"/></svg><svg class="w-[9px] h-[7px]"><use href="#down"/></svg></button>
                    <button class="flex items-center gap-[4px] pl-1" aria-label="Viewports"><svg class="w-6 h-6" viewBox="0 0 24 24" stroke="#444" stroke-width="1.3"><path d="M5 1H23V18L19 23V6H1L5 1Z" fill="#eee"/><path d="M1 6H18V23H1Z" fill="#98b9e6"/><circle cx="7" cy="16" r="3.500" fill="#f7f7f7"/><path d="M8 13L11 11H14V15L10 18" fill="#f7f7f7"/></svg><svg class="w-[9px] h-[7px]"><use href="#down"/></svg></button>
                </div>
            </div>
        </div>

        <!-- View cube and simulate panel -->
        <aside class="relative justify-self-end w-[375px] mr-[6px] flex flex-col items-end">
            <svg class="w-[128px] h-[153px]" viewBox="1785 206 128 153" aria-label="View cube">
                <defs><filter id="cs"><feGaussianBlur stdDeviation="4"/></filter></defs>
                <path d="M1808 260L1816 326L1822 332L1876 322L1880 300Z" fill="#999" opacity=".6" filter="url(#cs)"/>
                <path d="M1809 250L1869 244L1879 299L1873 320L1819 326L1813 306Z" fill="#f3f3f3"/>
                <path d="M1813 306L1879 299L1873 320L1819 326Z" fill="#e7e7e7"/>
                <path d="M1826 293L1866 290V304L1826 307Z" fill="#e3e6ec"/>
                <path d="M1809 250L1869 244L1879 299L1813 306ZM1879 299L1873 320L1819 326" fill="none" stroke="#8e8e8e" stroke-width="1.3" stroke-dasharray="10 5"/>
                <g text-anchor="middle" font-weight="bold" fill="#9a9da2"><text x="1842" y="279" font-size="14" transform="rotate(-4 1843 274)">TOP</text><text x="1846" y="316" font-size="10" transform="rotate(-5 1846 314)">FRONT</text></g>
                <path d="M1819 326L1813 306" stroke="#4040e8" stroke-width="2.2"/><path d="M1820 326L1882 319" stroke="#f05050" stroke-width="2.5"/>
                <g font-size="15" font-weight="bold"><text x="1806" y="306" fill="#7a7aff">Z</text><text x="1883" y="323" fill="#ff9090">X</text></g>
            </svg>

            <section class="w-full h-[659px] border-2 border-[#cfcfcf] bg-[#f1f1f1] flex flex-col text-base">
                <div class="h-[36px] border-b-2 border-[#d2d2d2] flex items-center text-[15px] text-[#666]">
                    <span class="w-[5px] h-4 border-l border-r-2 border-[#999] ml-px"></span>
                    <button class="ml-[10px]" aria-label="Hide simulate"><svg class="w-[14px] h-[14px]"><use href="#minus"/></svg></button>
                    <h2 class="ml-[5px] flex-1">SIMULATE</h2>
                    <button class="mr-[5px]" aria-label="Collapse simulate"><svg class="w-4 h-[10px] rotate-180"><use href="#rewind"/></svg></button>
                </div>
                <div class="h-[42px] pt-[3px] flex text-[#444] shrink-0">
                    <button class="w-[111px] border-2 border-b-0 border-[#cfcfcf] flex items-center gap-[9px] pl-2 pb-1"><svg class="w-6 h-4 text-[#777]"><use href="#eye"/></svg>Display</button>
                    <div class="flex-1 flex border-b-2 border-[#cfcfcf] pb-0.5">
                        <button class="w-[84px] border-r-2 border-[#cfcfcf] flex items-center gap-[10px] pl-[10px]"><svg class="w-[22px] h-[22px]" viewBox="0 0 22 22"><circle cx="11" cy="11" r="11" fill="#777"/><path d="M11 9V17M11 5V8" stroke="#f1f1f1" stroke-width="3"/></svg>Info</button>
                        <button class="w-[123px] border-r-2 border-[#cfcfcf] flex items-center gap-[10px] pl-[9px]"><svg class="w-6 h-6" viewBox="0 0 24 24"><path d="M0 18H5V24H0ZM6 12H11V24H6ZM13 15H17V24H13ZM19 9H23V24H19Z" fill="#777"/><path d="M1 12L9 5L13 9L23 0" fill="none" stroke="#888" stroke-width="1.5"/></svg>Statistics</button>
                    </div>
                </div>
                <div class="flex-1 flex text-[#b5b5b5] border-b border-[#c4c4c4] overflow-hidden">
                    <div class="flex-1 ml-0.5">
                        <div class="border-b border-[#dcdcdc] pb-1.5">
                            <label class="h-12 flex items-center pl-[11px] font-bold"><svg class="w-[9px] h-[14px] mr-4" viewBox="0 0 9 14"><path d="M0 0L9 7L0 14Z" fill="#a5a5a5"/></svg><input type="checkbox" class="appearance-none w-5 h-5 border-2 border-[#bdbdbd] rounded bg-linear-to-b from-[#f5f5f5] to-[#dedede] mr-[10px]">Tool</label>
                        </div>
                        <div class="border-b border-[#dcdcdc] pt-1 pb-[7px]">
                            <label class="h-12 flex items-center pl-[11px] font-bold"><svg class="w-[9px] h-[14px] mr-4" viewBox="0 0 9 14"><path d="M0 0L9 7L0 14Z" fill="#a5a5a5"/></svg><input type="checkbox" class="appearance-none w-5 h-5 border-2 border-[#bdbdbd] rounded bg-linear-to-b from-[#f5f5f5] to-[#dedede] mr-[10px]">Toolpath</label>
                        </div>
                        <div class="border-b border-[#dcdcdc] pt-1 pb-2">
                            <label class="h-12 flex items-center pl-[11px] font-bold"><svg class="w-[13px] h-[9px] mr-3" viewBox="0 0 13 9"><path d="M0 0H13L6.500 9Z" fill="#a5a5a5"/></svg><span class="relative flex mr-[10px]"><input type="checkbox" checked class="appearance-none w-5 h-5 border-2 border-[#bdbdbd] rounded bg-linear-to-b from-[#f5f5f5] to-[#dedede]"><svg class="absolute inset-0 w-5 h-5" viewBox="0 0 20 20"><path d="M5 10L8 15L16 4" fill="none" stroke="#888" stroke-width="2"/></svg></span>Stock</label>
                            <div class="h-[45px] grid grid-cols-[148px_150px] items-center pl-4"><label for="colorization">Colorization</label><div class="relative flex items-center"><select id="colorization" class="appearance-none w-full outline-none"><option>Operation</option></select><svg class="absolute right-0 w-[9px] h-[7px] text-[#999] pointer-events-none"><use href="#down"/></svg></div></div>
                            <div class="h-[45px] grid grid-cols-[148px_150px] items-center pl-4"><label for="material">Material</label><div class="relative flex items-center"><select id="material" class="appearance-none w-full outline-none"><option>Plastic Vinyl</option></select><svg class="absolute right-0 w-[9px] h-[7px] text-[#999] pointer-events-none"><use href="#down"/></svg></div></div>
                            <div class="h-[45px] grid grid-cols-[148px_143px] items-center pl-4"><label for="accuracy">Accuracy</label><div class="relative h-6"><svg class="w-full h-[22px]" viewBox="0 0 143 22"><rect y="8" width="143" height="7" rx="3.500" fill="#505050"/><path d="M3 8H48V15H3Q0 15 0 11.500T3 8Z" fill="#7898d8"/><path d="M46 1Q48-1 50 1L57 11V18Q57 21 54 21H42Q39 21 39 18V11Z" fill="url(#grey)" stroke="#777" stroke-width="1.6"/><path d="M40 15H56V18Q56 20 54 20H42Q40 20 40 18Z" fill="#777" opacity=".5"/></svg><input id="accuracy" type="range" value="33" class="absolute inset-0 w-full opacity-0"></div></div>
                            <div class="h-[45px] grid grid-cols-[144px_150px] items-center pl-4"><label for="transparent">Transparent</label><input id="transparent" type="checkbox" class="appearance-none w-5 h-5 border-2 border-[#bdbdbd] rounded bg-linear-to-b from-[#f5f5f5] to-[#dedede]"></div>
                            <div class="h-[45px] grid grid-cols-[144px_150px] items-center pl-4"><label for="collision">Stop on collision</label><input id="collision" type="checkbox" class="appearance-none w-5 h-5 border-2 border-[#bdbdbd] rounded bg-linear-to-b from-[#f5f5f5] to-[#dedede]"></div>
                        </div>
                        <div class="border-b border-[#dcdcdc] pt-1 pb-[7px]">
                            <h3 class="h-12 flex items-center pl-[11px] font-bold"><svg class="w-[13px] h-[9px] mr-[10px]" viewBox="0 0 13 9"><path d="M0 0H13L6.500 9Z" fill="#a5a5a5"/></svg>View</h3>
                            <div class="h-[45px] grid grid-cols-[148px_150px] items-center pl-4"><label for="viewpoint">Viewpoint</label><div class="relative flex items-center"><select id="viewpoint" class="appearance-none w-full outline-none"><option>Model</option></select><svg class="absolute right-0 w-[9px] h-[7px] text-[#999] pointer-events-none"><use href="#down"/></svg></div></div>
                        </div>
                    </div>
                    <div class="ml-[7px] mr-[3px] w-[9px] bg-[#c2c3c5]"><div class="h-[454px] rounded-full bg-[#979797] border-x border-[#888]"></div></div>
                </div>
                <div class="h-[52px] flex items-center justify-end pr-4 shrink-0">
                    <button class="w-[90px] h-7 border-2 border-[#c6c6c6] bg-[#e9e9e9] text-[#bbb] text-lg leading-6">Close</button>
                </div>
            </section>
        </aside>
    </main>

    <footer class="h-[18px] bg-[#808080] border-b-2 border-[#25272a] flex justify-end"><span class="w-1 h-full bg-black"></span></footer>
</body>
</html>
